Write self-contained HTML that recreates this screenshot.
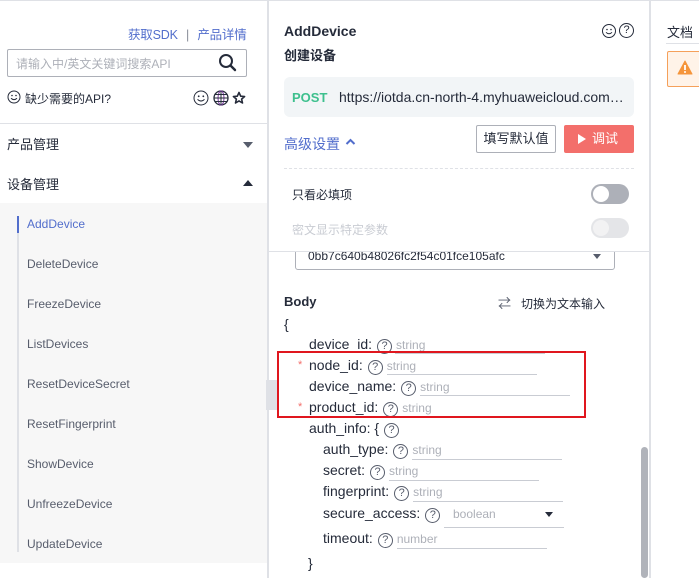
<!DOCTYPE html>
<html><head><meta charset="utf-8"><style>
*{margin:0;padding:0;box-sizing:border-box}
body{width:699px;height:578px;overflow:hidden;background:#fff;font-family:"Liberation Sans","Noto Sans CJK SC",sans-serif;color:#252b3a;position:relative}
.a{position:absolute;white-space:nowrap}
.item{position:absolute;left:27px;font-size:12px;color:#575d6c}
.k{position:absolute;font-size:14px;color:#252b3a}
.q{display:inline-block;width:15px;height:15px;border:1px solid #575d6c;border-radius:50%;font-size:11px;line-height:13px;text-align:center;color:#575d6c;vertical-align:0px;margin:0 4px 0 5px}
.ph{color:#adb0b8;font-size:12px}
.ul{position:absolute;height:1px;background:#c9ccd3}
</style></head><body>
<div class="a" style="left:0;top:0;width:699px;height:1px;background:#dfe1e6"></div>
<!-- left panel -->
<div class="a" style="left:128px;top:24px;font-size:12.5px;color:#526ecc;letter-spacing:-0.2px">获取SDK <span style="color:#8a8e99;margin:0 5px">|</span> 产品详情</div>
<div class="a" style="left:7px;top:49px;width:240px;height:28px;border:1px solid #adb0b8;border-radius:2px"></div>
<div class="a" style="left:16px;top:55px;font-size:12px;color:#adb0b8">请输入中/英文关键词搜索API</div>
<svg class="a" style="left:218px;top:53px" width="20" height="20" viewBox="0 0 20 20"><circle cx="8" cy="8" r="6" fill="none" stroke="#252b3a" stroke-width="2"/><path d="M12.5 12.5L17 17" stroke="#252b3a" stroke-width="2.4" stroke-linecap="round"/></svg>
<svg class="a" style="left:7px;top:90px" width="14" height="14" viewBox="0 0 14 14"><circle cx="7" cy="7" r="6" fill="none" stroke="#252b3a"/><circle cx="5" cy="5.5" r=".8" fill="#252b3a"/><circle cx="9" cy="5.5" r=".8" fill="#252b3a"/><path d="M4 8.2Q7 11 10 8.2" fill="none" stroke="#252b3a"/></svg>
<div class="a" style="left:25px;top:90px;font-size:12px;color:#252b3a">缺少需要的API?</div>
<svg class="a" style="left:193px;top:90px" width="16" height="16" viewBox="0 0 16 16"><circle cx="8" cy="8" r="7" fill="none" stroke="#252b3a"/><circle cx="5.7" cy="6.3" r=".9" fill="#252b3a"/><circle cx="10.3" cy="6.3" r=".9" fill="#252b3a"/><path d="M4.5 9.3Q8 12.8 11.5 9.3" fill="none" stroke="#252b3a"/></svg>
<svg class="a" style="left:213px;top:90px" width="16" height="16" viewBox="0 0 16 16"><circle cx="8" cy="8" r="7" fill="none" stroke="#252b3a" stroke-width="1.3"/><ellipse cx="8" cy="8" rx="3" ry="7" fill="none" stroke="#7a3aa0"/><path d="M1 8H15M2 4.5H14M2 11.5H14M8 1V15" stroke="#252b3a"/></svg>
<svg class="a" style="left:232px;top:91px" width="14" height="14" viewBox="0 0 14 14"><path d="M7 1.5L8.7 5.2 12.6 5.5 9.6 8.1 10.5 12 7 9.9 3.5 12 4.4 8.1 1.4 5.5 5.3 5.2Z" fill="none" stroke="#252b3a" stroke-width="1.6" stroke-linejoin="round"/></svg>
<div class="a" style="left:0;top:123px;width:268px;height:1px;background:#dfe1e6"></div>
<div class="a" style="left:7px;top:134px;font-size:13px">产品管理</div>
<div class="a" style="left:243px;top:142px;border-left:5px solid transparent;border-right:5px solid transparent;border-top:6px solid #575d6c"></div>
<div class="a" style="left:7px;top:174px;font-size:13px">设备管理</div>
<div class="a" style="left:243px;top:180px;border-left:5px solid transparent;border-right:5px solid transparent;border-bottom:6px solid #252b3a"></div>
<div class="a" style="left:0;top:203px;width:268px;height:360px;background:#f7f7f7"></div>
<div class="a" style="left:17px;top:216px;width:2px;height:336px;background:#dfe1e6"></div>
<div class="a" style="left:17px;top:216px;width:2px;height:17px;background:#526ecc"></div>
<div class="item" style="top:217px;color:#526ecc">AddDevice</div>
<div class="item" style="top:257px">DeleteDevice</div>
<div class="item" style="top:297px">FreezeDevice</div>
<div class="item" style="top:337px">ListDevices</div>
<div class="item" style="top:377px">ResetDeviceSecret</div>
<div class="item" style="top:417px">ResetFingerprint</div>
<div class="item" style="top:457px">ShowDevice</div>
<div class="item" style="top:497px">UnfreezeDevice</div>
<div class="item" style="top:537px">UpdateDevice</div>
<div class="a" style="left:267px;top:0;width:2px;height:578px;background:#dfe1e6"></div>
<!-- middle -->
<div class="a" style="left:295px;top:230px;width:320px;height:40px;border:1px solid #adb0b8;border-radius:0 0 3px 3px"></div>
<div class="a" style="left:308px;top:249px;font-size:12px;color:#252b3a">0bb7c640b48026fc2f54c01fce105afc</div>
<div class="a" style="left:593px;top:254px;border-left:4px solid transparent;border-right:4px solid transparent;border-top:5px solid #575d6c"></div>
<div class="a" style="left:269px;top:1px;width:380px;height:251px;background:#fff;border-bottom:1px solid #dfe1e6"></div>
<div class="a" style="left:284px;top:23px;font-size:14px;font-weight:bold">AddDevice</div>
<div class="a" style="left:284px;top:45px;font-size:13px;font-weight:bold">创建设备</div>
<svg class="a" style="left:601px;top:23px" width="16" height="16" viewBox="0 0 16 16"><circle cx="8" cy="8" r="6.5" fill="none" stroke="#252b3a"/><circle cx="6" cy="6.5" r=".8" fill="#252b3a"/><circle cx="10" cy="6.5" r=".8" fill="#252b3a"/><path d="M5 9.3Q8 12.3 11 9.3" fill="none" stroke="#252b3a"/></svg>
<div class="a" style="left:619px;top:23px;width:15px;height:15px;border:1px solid #252b3a;border-radius:50%;font-size:11px;line-height:13px;text-align:center">?</div>
<div class="a" style="left:284px;top:77px;width:350px;height:40px;background:#f2f5f7;border-radius:6px"></div>
<div class="a" style="left:292px;top:90px;font-size:13px;font-weight:bold;color:#3ec08e">POST</div>
<div class="a" style="left:339px;top:89px;font-size:14px;color:#252b3a">https://iotda.cn-north-4.myhuaweicloud.com…</div>
<div class="a" style="left:476px;top:125px;width:80px;height:28px;border:1px solid #adb0b8;border-radius:2px;font-size:13px;text-align:center;line-height:26px">填写默认值</div>
<div class="a" style="left:564px;top:125px;width:70px;height:28px;background:#f36f6b;border-radius:2px;font-size:13px;color:#fff;line-height:28px;padding-left:14px"><span style="display:inline-block;border-top:5px solid transparent;border-bottom:5px solid transparent;border-left:8px solid #fff;vertical-align:-1px;margin-right:6px"></span>调试</div>
<div class="a" style="left:284px;top:134px;font-size:14px;color:#526ecc">高级设置</div>
<svg class="a" style="left:345px;top:138px" width="11" height="8" viewBox="0 0 11 8"><path d="M1.5 6L5.5 2 9.5 6" fill="none" stroke="#526ecc" stroke-width="2"/></svg>
<div class="a" style="left:284px;top:168px;width:350px;border-top:1px dashed #dfe1e6"></div>
<div class="a" style="left:292px;top:186px;font-size:12px">只看必填项</div>
<div class="a" style="left:591px;top:184px;width:38px;height:20px;background:#adb0b8;border-radius:10px"><div style="position:absolute;left:2px;top:2px;width:16px;height:16px;border-radius:50%;background:#fff"></div></div>
<div class="a" style="left:292px;top:221px;font-size:12px;color:#c9ccd3">密文显示特定参数</div>
<div class="a" style="left:591px;top:218px;width:38px;height:20px;background:#e4e5e8;border-radius:10px"><div style="position:absolute;left:2px;top:2px;width:16px;height:16px;border-radius:50%;background:#f2f2f3"></div></div>
<div class="a" style="left:284px;top:294px;font-size:13px;font-weight:bold">Body</div>
<div class="a" style="left:498px;top:293px;font-size:13px;color:#575d6c">⇄</div>
<div class="a" style="left:521px;top:295px;font-size:12px">切换为文本输入</div>
<div class="k" style="left:284px;top:316px">{</div>
<div class="k" style="left:309px;top:336px">device_id:<span class="q">?</span><span class="ph">string</span></div>
<div class="ul" style="left:395px;top:353px;width:150px"></div>
<div class="a" style="left:298px;top:359px;color:#f36f6b;font-size:11px">*</div>
<div class="k" style="left:309px;top:357px">node_id:<span class="q">?</span><span class="ph">string</span></div>
<div class="ul" style="left:387px;top:374px;width:150px"></div>
<div class="k" style="left:309px;top:378px">device_name:<span class="q">?</span><span class="ph">string</span></div>
<div class="ul" style="left:420px;top:395px;width:150px"></div>
<div class="a" style="left:298px;top:401px;color:#f36f6b;font-size:11px">*</div>
<div class="k" style="left:309px;top:399px">product_id:<span class="q">?</span><span class="ph">string</span></div>
<div class="k" style="left:309px;top:420px">auth_info: {<span class="q">?</span></div>
<div class="k" style="left:323px;top:441px">auth_type:<span class="q">?</span><span class="ph">string</span></div>
<div class="ul" style="left:412px;top:459px;width:150px"></div>
<div class="k" style="left:323px;top:462px">secret:<span class="q">?</span><span class="ph">string</span></div>
<div class="ul" style="left:389px;top:480px;width:150px"></div>
<div class="k" style="left:323px;top:483px">fingerprint:<span class="q">?</span><span class="ph">string</span></div>
<div class="ul" style="left:413px;top:501px;width:150px"></div>
<div class="k" style="left:323px;top:505px">secure_access:<span class="q">?</span></div>
<div class="a ph" style="left:453px;top:507px">boolean</div>
<div class="a" style="left:545px;top:512px;border-left:4px solid transparent;border-right:4px solid transparent;border-top:5px solid #252b3a"></div>
<div class="ul" style="left:444px;top:527px;width:120px"></div>
<div class="k" style="left:323px;top:530px">timeout:<span class="q">?</span><span class="ph">number</span></div>
<div class="ul" style="left:397px;top:548px;width:150px"></div>
<div class="k" style="left:308px;top:555px">}</div>
<div class="a" style="left:277px;top:351px;width:309px;height:67px;border:2px solid #e0161e"></div>
<div class="a" style="left:266px;top:380px;width:11px;height:30px;background:#dfe1e6"></div>
<div class="a" style="left:641px;top:447px;width:7px;height:131px;background:#b0b3ba;border-radius:4px"></div>
<div class="a" style="left:649px;top:0;width:2px;height:578px;background:#dfe1e6"></div>
<!-- right -->
<div class="a" style="left:667px;top:22px;font-size:13px">文档</div>
<div class="a" style="left:666px;top:43px;width:33px;height:1px;background:#dfe1e6"></div>
<div class="a" style="left:667px;top:51px;width:40px;height:36px;background:#fff3e8;border:1px solid #f5a05a;border-radius:2px"></div>
<svg class="a" style="left:677px;top:60px" width="16" height="15" viewBox="0 0 16 15"><path d="M8 1L15 14H1Z" fill="#f5953b" stroke="#f5953b" stroke-linejoin="round"/><path d="M8 5V10" stroke="#fff" stroke-width="1.8"/><circle cx="8" cy="12" r="1" fill="#fff"/></svg>
</body></html>
